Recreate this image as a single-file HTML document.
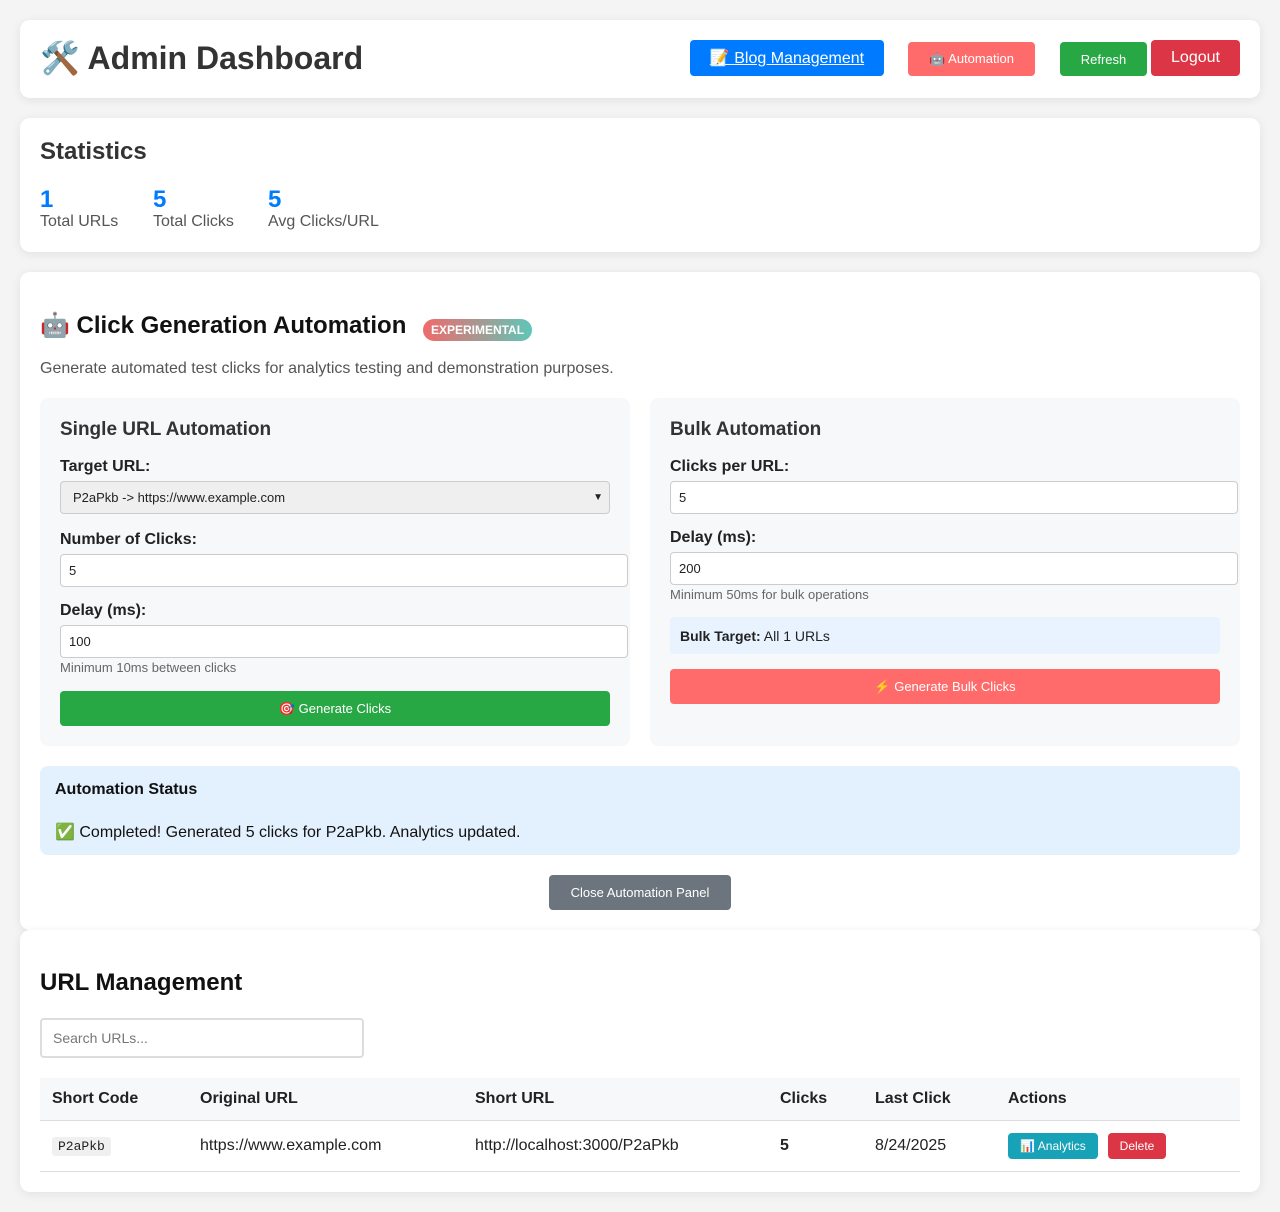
<!DOCTYPE html>
<html><head><meta charset="utf-8"><style>
*{box-sizing:border-box;margin:0;padding:0}
body{width:1280px;height:1212px;background:#f4f4f4;font-family:"Liberation Sans","Noto Sans CJK JP",sans-serif;position:relative;color:#333;overflow:hidden}
.a{position:absolute}
.card{position:absolute;left:20px;width:1240px;background:#fff;border-radius:10px;box-shadow:0 2px 10px rgba(0,0,0,.08)}
.btn{position:absolute;color:#fff;border-radius:4px;display:flex;align-items:center;justify-content:center}
.lbl{position:absolute;font-weight:bold;font-size:16px;color:#222}
.inp{position:absolute;border:1px solid #ccc;border-radius:4px;background:#fff;font-size:13px;padding-left:8px;display:flex;align-items:center;color:#222;height:33px}
.hint{position:absolute;font-size:13px;color:#666}
.th{position:absolute;font-weight:bold;font-size:16px;color:#222;top:1090px}
.td{position:absolute;font-size:16px;color:#222;top:1137px}
</style></head><body>
<div class="card" style="top:20px;height:78px"></div>
<div class="a" style="left:40px;top:39px;font-size:32px;font-weight:bold;color:#333">🛠️ Admin Dashboard</div>
<div class="btn" style="left:690px;top:40px;width:194px;height:36px;background:#007bff;font-size:16px;text-decoration:underline">📝 Blog Management</div>
<div class="btn" style="left:908px;top:42px;width:127px;height:34px;background:#ff6b6b;font-size:13px">🤖 Automation</div>
<div class="btn" style="left:1060px;top:42px;width:87px;height:34px;background:#28a745;font-size:13px">Refresh</div>
<div class="btn" style="left:1151px;top:40px;width:89px;height:36px;background:#dc3545;font-size:16px">Logout</div>

<div class="card" style="top:118px;height:134px"></div>
<div class="a" style="left:40px;top:138px;font-size:24px;font-weight:bold">Statistics</div>
<div class="a" style="left:40px;top:186px;font-size:24px;font-weight:bold;color:#007bff">1</div>
<div class="a" style="left:40px;top:213px;font-size:16px;color:#555">Total URLs</div>
<div class="a" style="left:153px;top:186px;font-size:24px;font-weight:bold;color:#007bff">5</div>
<div class="a" style="left:153px;top:213px;font-size:16px;color:#555">Total Clicks</div>
<div class="a" style="left:268px;top:186px;font-size:24px;font-weight:bold;color:#007bff">5</div>
<div class="a" style="left:268px;top:213px;font-size:16px;color:#555">Avg Clicks/URL</div>

<div class="card" style="top:272px;height:658px"></div>
<div class="a" style="left:40px;top:311px;font-size:24px;font-weight:bold;color:#111">🤖 Click Generation Automation</div>
<div class="a" style="left:423px;top:319px;width:109px;height:22px;border-radius:11px;background:linear-gradient(90deg,#f06a6a,#5fc6b8);color:#fff;font-size:12px;font-weight:bold;display:flex;align-items:center;justify-content:center">EXPERIMENTAL</div>
<div class="a" style="left:40px;top:360px;font-size:16px;color:#555">Generate automated test clicks for analytics testing and demonstration purposes.</div>

<div class="a" style="left:40px;top:398px;width:590px;height:348px;background:#f7f8f9;border-radius:8px"></div>
<div class="a" style="left:60px;top:419px;font-size:19px;font-weight:bold;color:#333">Single URL Automation</div>
<div class="lbl" style="left:60px;top:458px">Target URL:</div>
<div class="inp" style="left:60px;top:481px;width:550px;background:#efefef;padding-left:12px">P2aPkb -&gt; https://www.example.com<span style="position:absolute;right:6px;font-size:10px">▼</span></div>
<div class="lbl" style="left:60px;top:531px">Number of Clicks:</div>
<div class="inp" style="left:60px;top:554px;width:568px">5</div>
<div class="lbl" style="left:60px;top:602px">Delay (ms):</div>
<div class="inp" style="left:60px;top:625px;width:568px">100</div>
<div class="hint" style="left:60px;top:660px">Minimum 10ms between clicks</div>
<div class="btn" style="left:60px;top:691px;width:550px;height:35px;background:#28a745;font-size:13px">🎯 Generate Clicks</div>

<div class="a" style="left:650px;top:398px;width:590px;height:348px;background:#f7f8f9;border-radius:8px"></div>
<div class="a" style="left:670px;top:419px;font-size:19px;font-weight:bold;color:#333">Bulk Automation</div>
<div class="lbl" style="left:670px;top:458px">Clicks per URL:</div>
<div class="inp" style="left:670px;top:481px;width:568px">5</div>
<div class="lbl" style="left:670px;top:529px">Delay (ms):</div>
<div class="inp" style="left:670px;top:552px;width:568px">200</div>
<div class="hint" style="left:670px;top:587px">Minimum 50ms for bulk operations</div>
<div class="a" style="left:670px;top:617px;width:550px;height:37px;background:#e8f3ff;border-radius:4px;font-size:14px;padding:11px 10px;color:#222"><b>Bulk Target:</b> All 1 URLs</div>
<div class="btn" style="left:670px;top:669px;width:550px;height:35px;background:#ff6b6b;font-size:13px">⚡ Generate Bulk Clicks</div>

<div class="a" style="left:40px;top:766px;width:1200px;height:89px;background:#e3f0fd;border-radius:8px"></div>
<div class="a" style="left:55px;top:781px;font-size:16px;font-weight:bold;color:#111">Automation Status</div>
<div class="a" style="left:55px;top:822px;font-size:16px;color:#111">✅ Completed! Generated 5 clicks for P2aPkb. Analytics updated.</div>
<div class="btn" style="left:549px;top:875px;width:182px;height:35px;background:#6c757d;font-size:13px">Close Automation Panel</div>

<div class="card" style="top:930px;height:262px"></div>
<div class="a" style="left:40px;top:969px;font-size:24px;font-weight:bold;color:#111">URL Management</div>
<div class="a" style="left:40px;top:1018px;width:324px;height:40px;border:2px solid #ddd;border-radius:4px;font-size:14px;color:#777;padding:10px 11px">Search URLs...</div>
<div class="a" style="left:40px;top:1078px;width:1200px;height:43px;background:#f7f8f9;border-bottom:1px solid #ddd"></div>
<div class="th" style="left:52px">Short Code</div>
<div class="th" style="left:200px">Original URL</div>
<div class="th" style="left:475px">Short URL</div>
<div class="th" style="left:780px">Clicks</div>
<div class="th" style="left:875px">Last Click</div>
<div class="th" style="left:1008px">Actions</div>
<div class="a" style="left:52px;top:1137px;background:#f0f0f0;border-radius:3px;font-family:'Liberation Mono',monospace;font-size:13px;padding:2px 6px;color:#222">P2aPkb</div>
<div class="td" style="left:200px">https://www.example.com</div>
<div class="td" style="left:475px">http://localhost:3000/P2aPkb</div>
<div class="td" style="left:780px;font-weight:bold">5</div>
<div class="td" style="left:875px">8/24/2025</div>
<div class="btn" style="left:1008px;top:1133px;width:90px;height:26px;background:#17a2b8;font-size:12px">📊 Analytics</div>
<div class="btn" style="left:1108px;top:1133px;width:58px;height:26px;background:#dc3545;font-size:12px">Delete</div>
<div class="a" style="left:40px;top:1171px;width:1200px;height:1px;background:#ddd"></div>
</body></html>
